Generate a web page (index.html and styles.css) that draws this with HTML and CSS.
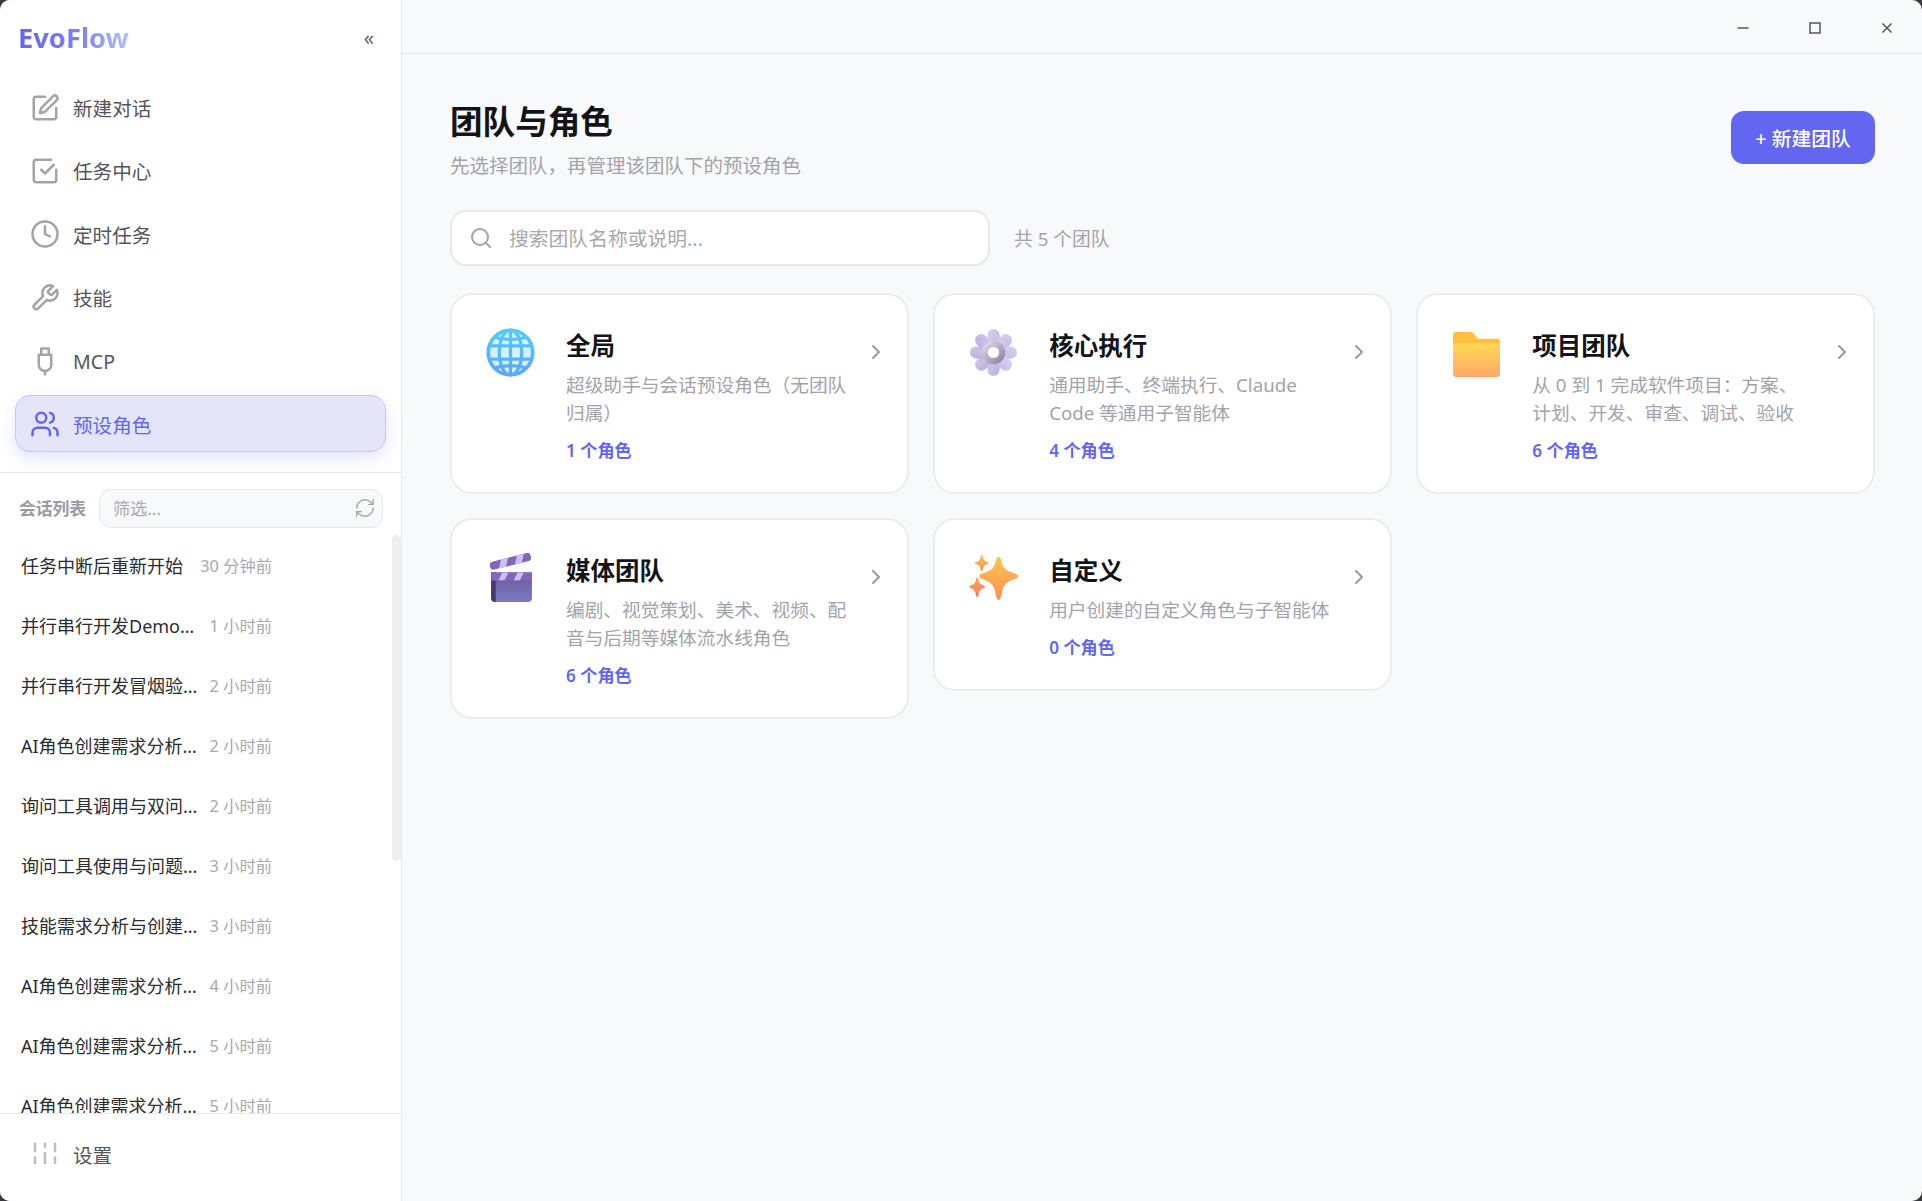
FILE: index.html
```html
<!DOCTYPE html>
<html lang="zh-CN">
<head>
  <meta charset="UTF-8" />
  <title>EvoFlow</title>
  <link rel="stylesheet" href="styles.css">
</head>
<body>
<div class="app">
  <aside class="sidebar">
    <div class="brand">
      <span class="logo">EvoFlow</span>
      <span class="collapse">«</span>
    </div>
    <nav class="nav">
      <a class="nav-item">
        <svg class="icon" viewBox="0 0 24 24"><path d="M12 3H5a2 2 0 0 0-2 2v14a2 2 0 0 0 2 2h14a2 2 0 0 0 2-2v-7"/><path d="M18.375 2.625a1 1 0 0 1 3 3l-9.013 9.014a2 2 0 0 1-.853.505l-2.873.84a.5.5 0 0 1-.62-.62l.84-2.873a2 2 0 0 1 .506-.852z"/></svg>
        新建对话
      </a>
      <a class="nav-item">
        <svg class="icon" viewBox="0 0 24 24"><path d="M21 11v8a2 2 0 0 1-2 2H5a2 2 0 0 1-2-2V5a2 2 0 0 1 2-2h12"/><path d="m9 11 3 3 7-7"/></svg>
        任务中心
      </a>
      <a class="nav-item">
        <svg class="icon" viewBox="0 0 24 24"><circle cx="12" cy="12" r="10"/><path d="M12 6v6l4 2"/></svg>
        定时任务
      </a>
      <a class="nav-item">
        <svg class="icon" viewBox="0 0 24 24"><path d="M14.7 6.3a1 1 0 0 0 0 1.4l1.6 1.6a1 1 0 0 0 1.4 0l3.77-3.77a6 6 0 0 1-7.94 7.94l-6.91 6.91a2.12 2.12 0 0 1-3-3l6.91-6.91a6 6 0 0 1 7.94-7.94l-3.76 3.76z"/></svg>
        技能
      </a>
      <a class="nav-item">
        <svg class="icon" viewBox="0 0 24 24"><path d="M9 7V2h6v5"/><path d="M7 7h10v8a5 5 0 0 1-10 0z"/><path d="M12 20v2.5"/></svg>
        MCP
      </a>
      <a class="nav-item active">
        <svg class="icon" viewBox="0 0 24 24"><path d="M16 21v-2a4 4 0 0 0-4-4H6a4 4 0 0 0-4 4v2"/><circle cx="9" cy="7" r="4"/><path d="M22 21v-2a4 4 0 0 0-3-3.87"/><path d="M16 3.13a4 4 0 0 1 0 7.75"/></svg>
        预设角色
      </a>
    </nav>

    <div class="filter-row">
      <span class="filter-label">会话列表</span>
      <div class="filter-box">
        <input class="filter-input" placeholder="筛选...">
        <svg class="refresh" viewBox="0 0 24 24"><path d="M3 12a9 9 0 0 1 9-9 9.75 9.75 0 0 1 6.74 2.74L21 8"/><path d="M21 3v5h-5"/><path d="M21 12a9 9 0 0 1-9 9 9.75 9.75 0 0 1-6.74-2.74L3 16"/><path d="M8 16H3v5"/></svg>
      </div>
    </div>

    <div class="sessions-wrap">
      <div class="sessions">
        <div class="session"><span class="session-title">任务中断后重新开始</span><span class="session-time">30 分钟前</span></div>
        <div class="session"><span class="session-title">并行串行开发Demo功能验证</span><span class="session-time">1 小时前</span></div>
        <div class="session"><span class="session-title">并行串行开发冒烟验证任务</span><span class="session-time">2 小时前</span></div>
        <div class="session"><span class="session-title">AI角色创建需求分析与设计</span><span class="session-time">2 小时前</span></div>
        <div class="session"><span class="session-title">询问工具调用与双问题测试</span><span class="session-time">2 小时前</span></div>
        <div class="session"><span class="session-title">询问工具使用与问题反馈记录</span><span class="session-time">3 小时前</span></div>
        <div class="session"><span class="session-title">技能需求分析与创建流程梳理</span><span class="session-time">3 小时前</span></div>
        <div class="session"><span class="session-title">AI角色创建需求分析与设计</span><span class="session-time">4 小时前</span></div>
        <div class="session"><span class="session-title">AI角色创建需求分析与设计</span><span class="session-time">5 小时前</span></div>
        <div class="session"><span class="session-title">AI角色创建需求分析与设计</span><span class="session-time">5 小时前</span></div>
      </div>
      <div class="scroll-thumb"></div>
    </div>

    <div class="sidebar-footer">
      <a class="nav-item">
        <svg class="icon icon-flat" viewBox="0 0 24 24"><path d="M4 3v7.500M4 14v6M12 3v4M12 10.500V20M20 3v7.500M20 14v6"/></svg>
        设置
      </a>
    </div>
  </aside>

  <main class="main">
    <div class="titlebar">
      <button class="win-btn"><svg viewBox="0 0 12 12"><path d="M.5 6h11"/></svg></button>
      <button class="win-btn"><svg viewBox="0 0 12 12"><rect x="1" y="1" width="10" height="10"/></svg></button>
      <button class="win-btn"><svg viewBox="0 0 12 12"><path d="M1.500 1.500l9 9M10.500 1.500l-9 9"/></svg></button>
    </div>

    <div class="content">
      <div class="page-head">
        <div>
          <h1>团队与角色</h1>
          <p class="subtitle">先选择团队，再管理该团队下的预设角色</p>
        </div>
        <button class="new-btn">+ 新建团队</button>
      </div>

      <div class="search-row">
        <div class="search-box">
          <svg viewBox="0 0 24 24"><path d="m21 21-4.34-4.34"/><circle cx="11" cy="11" r="8"/></svg>
          <input placeholder="搜索团队名称或说明...">
        </div>
        <span class="total">共 5 个团队</span>
      </div>

      <div class="teams">
        <div class="card">
          <svg class="card-icon" viewBox="0 0 48 48">
            <defs><linearGradient id="globeLine" x1="0" y1="0" x2="0" y2="1"><stop offset="0" stop-color="#55c9f9"/><stop offset="1" stop-color="#5aa8fb"/></linearGradient></defs>
            <circle cx="24" cy="24" r="21.800" fill="#d4f1ff" stroke="url(#globeLine)" stroke-width="3.600"/>
            <g fill="none" stroke="url(#globeLine)" stroke-width="3.200">
              <ellipse cx="24" cy="24" rx="11" ry="22"/>
              <path d="M24 2v44M3 17.500h42M3 30.500h42M8 8.500c9 3.500 23 3.500 32 0M8 39.500c9-3.500 23-3.500 32 0"/>
            </g>
          </svg>
          <div class="card-body">
            <h3>全局</h3>
            <p class="desc">超级助手与会话预设角色（无团队归属）</p>
            <p class="count">1 个角色</p>
          </div>
          <svg class="chevron" viewBox="0 0 24 24"><path d="m9 18 6-6-6-6"/></svg>
        </div>

        <div class="card">
          <svg class="card-icon" viewBox="0 0 48 48">
            <defs>
              <linearGradient id="gearBody" x1="0" y1="0" x2="1" y2="1"><stop offset="0" stop-color="#d8d0f0"/><stop offset="1" stop-color="#bdb1de"/></linearGradient>
              <linearGradient id="gearRing" x1="0" y1="0" x2="1" y2="1"><stop offset="0" stop-color="#dcd8e6"/><stop offset="1" stop-color="#8f86a8"/></linearGradient>
            </defs>
            <g fill="url(#gearBody)">
              <circle cx="24" cy="24" r="16"/>
              <rect x="18" y="1" width="12" height="46" rx="6"/>
              <rect x="18" y="1" width="12" height="46" rx="6" transform="rotate(45 24 24)"/>
              <rect x="18" y="1" width="12" height="46" rx="6" transform="rotate(90 24 24)"/>
              <rect x="18" y="1" width="12" height="46" rx="6" transform="rotate(135 24 24)"/>
            </g>
            <circle cx="24" cy="24" r="8.500" fill="#fff" stroke="url(#gearRing)" stroke-width="6"/>
          </svg>
          <div class="card-body">
            <h3>核心执行</h3>
            <p class="desc">通用助手、终端执行、Claude Code 等通用子智能体</p>
            <p class="count">4 个角色</p>
          </div>
          <svg class="chevron" viewBox="0 0 24 24"><path d="m9 18 6-6-6-6"/></svg>
        </div>

        <div class="card">
          <svg class="card-icon" viewBox="0 0 48 48">
            <defs><linearGradient id="folderFront" x1="0" y1="0" x2="0" y2="1"><stop offset="0" stop-color="#ffd955"/><stop offset="1" stop-color="#ffa76a"/></linearGradient></defs>
            <path d="M1 7a3 3 0 0 1 3-3h14a4 4 0 0 1 3 1.400l4.500 5.100H44a3 3 0 0 1 3 3V30H1z" fill="#ffbf3f"/>
            <path d="M1 18a3 3 0 0 1 3-3h40a3 3 0 0 1 3 3v27a3 3 0 0 1-3 3H4a3 3 0 0 1-3-3z" fill="url(#folderFront)"/>
          </svg>
          <div class="card-body">
            <h3>项目团队</h3>
            <p class="desc">从 0 到 1 完成软件项目：方案、<br>计划、开发、审查、调试、验收</p>
            <p class="count">6 个角色</p>
          </div>
          <svg class="chevron" viewBox="0 0 24 24"><path d="m9 18 6-6-6-6"/></svg>
        </div>

        <div class="card">
          <svg class="card-icon" viewBox="0 0 48 48">
            <defs>
              <linearGradient id="clapBody" x1="0" y1="0" x2="0" y2="1"><stop offset="0" stop-color="#6f5a95"/><stop offset="1" stop-color="#7a7bc6"/></linearGradient>
              <clipPath id="clapBar"><rect x="5" y="19" width="40" height="8"/></clipPath>
            </defs>
            <path d="M5 19h40v25a4 4 0 0 1-4 4H9a4 4 0 0 1-4-4z" fill="url(#clapBody)"/>
            <path d="M5 19h4.500v29H9a4 4 0 0 1-4-4z" fill="#473a66"/>
            <rect x="5" y="19" width="40" height="8" fill="#8465b8"/>
            <g clip-path="url(#clapBar)" fill="#c9c0f4">
              <path d="M12 27l4-8h6l-4 8zM27 27l4-8h6l-4 8z"/>
            </g>
            <g transform="rotate(-14 5 17)">
              <rect x="5" y="9" width="41" height="8" rx="3" fill="#8465b8"/>
              <path d="M13 17l4-8h7l-4 8zM29 17l4-8h7l-4 8z" fill="#c9c0f4"/>
            </g>
          </svg>
          <div class="card-body">
            <h3>媒体团队</h3>
            <p class="desc">编剧、视觉策划、美术、视频、配音与后期等媒体流水线角色</p>
            <p class="count">6 个角色</p>
          </div>
          <svg class="chevron" viewBox="0 0 24 24"><path d="m9 18 6-6-6-6"/></svg>
        </div>

        <div class="card">
          <svg class="card-icon" viewBox="0 0 48 48">
            <defs>
              <linearGradient id="sparkBig" x1="0" y1="0" x2="0" y2="1"><stop offset="0" stop-color="#ffc552"/><stop offset="1" stop-color="#ff8f52"/></linearGradient>
              <linearGradient id="sparkLow" x1="0" y1="0" x2="0" y2="1"><stop offset="0" stop-color="#ffa45a"/><stop offset="1" stop-color="#ff7a5e"/></linearGradient>
            </defs>
            <path d="M29 4c1.400 0 2.300 1.500 3 4.500 1.500 6.500 4 8.500 13 11.500 2 .7 3 1.600 3 2.700s-1 2-3 2.700c-9 3-11.500 6-13 14-.7 4-1.600 6.600-3 6.600s-2.300-2.600-3-6.600c-1.500-8-4-11-13-14-2-.7-3-1.600-3-2.700s1-2 3-2.700c9-3 11.500-5 13-11.500.7-3 1.600-4.500 3-4.500z" fill="url(#sparkBig)"/>
            <path d="M12.500 2c.6 0 .9.600 1.100 1.600.6 3 1.500 4.100 4.600 5.200.7.200 1 .6 1 1s-.3.800-1 1c-3.100 1.100-4 2.200-4.600 5.200-.2 1-.5 1.600-1.100 1.600s-.9-.6-1.100-1.600c-.6-3-1.500-4.100-4.600-5.200-.7-.2-1-.6-1-1s.3-.8 1-1c3.100-1.100 4-2.200 4.600-5.200.2-1 .5-1.600 1.100-1.600z" fill="url(#sparkBig)"/>
            <path d="M8 24c.7 0 1 .7 1.200 1.800.7 3.600 1.800 4.800 5.400 6.100.8.300 1.200.7 1.200 1.200s-.4.900-1.200 1.200c-3.600 1.300-4.700 3-5.400 7.100-.2 1.100-.5 1.800-1.200 1.800s-1-.7-1.200-1.800c-.7-4.100-1.800-5.800-5.400-7.100C.8 34 .4 33.600.4 33.100s.4-.9 1.200-1.200c3.600-1.300 4.700-2.500 5.400-6.100C7 24.700 7.300 24 8 24z" fill="url(#sparkLow)"/>
          </svg>
          <div class="card-body">
            <h3>自定义</h3>
            <p class="desc">用户创建的自定义角色与子智能体</p>
            <p class="count">0 个角色</p>
          </div>
          <svg class="chevron" viewBox="0 0 24 24"><path d="m9 18 6-6-6-6"/></svg>
        </div>
      </div>
    </div>
  </main>
</div>
</body>
</html>
```

FILE: styles.css
```css
* {
  margin: 0;
  padding: 0;
  box-sizing: border-box;
}
html, body {
  height: 100%;
}
body {
  background: #3a3a3c;
  font-family: "Noto Sans", "Noto Sans CJK SC", sans-serif;
  color: #1a1a1a;
  overflow: hidden;
}
.app {
  display: flex;
  height: 100%;
  border-radius: 10px;
  overflow: hidden;
  background: #f8f9fb;
}

/* sidebar */
.sidebar {
  width: 402px;
  flex: none;
  display: flex;
  flex-direction: column;
  background: #fff;
  border-right: 1px solid #e8e8ec;
}
.brand {
  height: 78.5px;
  flex: none;
  display: flex;
  align-items: center;
  justify-content: space-between;
  padding: 0 27px 3px 18px;
}
.logo {
  font-size: 27.3px;
  font-weight: 700;
  background: linear-gradient(90deg, #6366f1 0%, #7c7ff5 55%, #b8c0fe 100%);
  -webkit-background-clip: text;
  background-clip: text;
  color: transparent;
}
.collapse {
  font-size: 20px;
  line-height: 1;
  color: #5f5f6a;
}
.nav {
  display: flex;
  flex-direction: column;
  gap: 6.4px;
  padding: 0 15px 19.5px;
  border-bottom: 1px solid #e8e8ec;
}
.nav-item {
  height: 57px;
  display: flex;
  align-items: center;
  gap: 13px;
  padding: 1px 0 0 14px;
  font-size: 19.6px;
  color: #55555e;
  border: 1px solid transparent;
  border-radius: 15px;
}
.nav-item .icon {
  width: 30px;
  height: 30px;
  flex: none;
  fill: none;
  stroke: #a3a3aa;
  stroke-width: 2;
  stroke-linecap: round;
  stroke-linejoin: round;
}
.nav-item .icon-flat {
  stroke: #bcbcc1;
  stroke-linecap: butt;
}
.nav-item.active {
  background: #e4e5f9;
  border-color: #c5c6f5;
  color: #6366f1;
  box-shadow: 0 6px 16px rgba(99, 102, 241, 0.18);
}
.nav-item.active .icon {
  stroke: #6366f1;
}
.filter-row {
  display: flex;
  align-items: center;
  justify-content: space-between;
  flex: none;
  padding: 16px 18px 7px 19px;
}
.filter-label {
  font-size: 16.8px;
  font-weight: 700;
  color: #9a9aa2;
}
.filter-box {
  width: 284px;
  height: 39px;
  display: flex;
  align-items: center;
  background: #f8f9fb;
  border: 1px solid #e8e8ec;
  border-radius: 12px;
  padding: 0 6px 0 13px;
}
.filter-input {
  flex: 1;
  min-width: 0;
  border: 0;
  outline: 0;
  background: transparent;
  font: inherit;
  font-size: 17.15px;
}
.filter-input::placeholder,
.search-box input::placeholder {
  color: #a8a8b0;
  opacity: 1;
}
.refresh {
  width: 22px;
  height: 22px;
  flex: none;
  fill: none;
  stroke: #a3a3aa;
  stroke-width: 1.5;
  stroke-linecap: round;
  stroke-linejoin: round;
}
.sessions-wrap {
  position: relative;
  flex: 1;
  min-height: 0;
}
.sessions {
  height: 100%;
  overflow: hidden;
}
.scroll-thumb {
  position: absolute;
  top: 0;
  right: 0;
  width: 9px;
  height: 326px;
  background: #efeff1;
  border-radius: 5px;
}
.session {
  height: 60px;
  display: flex;
  align-items: center;
  padding: 0 129px 0 21px;
}
.session-title {
  max-width: 178px;
  white-space: nowrap;
  overflow: hidden;
  text-overflow: ellipsis;
  font-size: 18px;
  color: #2b2b30;
}
.session-time {
  margin-left: auto;
  white-space: nowrap;
  font-size: 16.3px;
  color: #a8a8b0;
}
.sidebar-footer {
  height: 88px;
  flex: none;
  border-top: 1px solid #e8e8ec;
  padding: 11px 15px 0;
}

/* main */
.main {
  flex: 1;
  min-width: 0;
  display: flex;
  flex-direction: column;
}
.titlebar {
  height: 54px;
  flex: none;
  display: flex;
  justify-content: flex-end;
  border-bottom: 1px solid #e5e5e8;
}
.win-btn {
  width: 72px;
  display: flex;
  align-items: center;
  justify-content: center;
  border: 0;
  background: transparent;
  padding: 2px 0 0 2px;
}
.win-btn svg {
  width: 12px;
  height: 12px;
  fill: none;
  stroke: #555560;
  stroke-width: 1.5;
}
.content {
  flex: 1;
  padding: 45px 47px 0 48px;
}
.page-head {
  display: flex;
  justify-content: space-between;
  align-items: flex-start;
}
h1 {
  margin-top: 1px;
  font-size: 32.6px;
  font-weight: 700;
  line-height: 44px;
  color: #141418;
}
.subtitle {
  margin-top: 8px;
  font-size: 19.5px;
  line-height: 28px;
  color: #a3a3ab;
}
.new-btn {
  width: 144px;
  height: 53px;
  margin-top: 12px;
  border: 0;
  border-radius: 13px;
  background: #6366f1;
  color: #fff;
  font: inherit;
  font-size: 19.8px;
  font-weight: 500;
}
.search-row {
  display: flex;
  align-items: center;
  gap: 24px;
  margin-top: 30px;
}
.search-box {
  width: 540px;
  height: 56px;
  display: flex;
  align-items: center;
  gap: 16px;
  padding: 0 18px 0 17px;
  background: #fff;
  border: 2px solid #e8e8ec;
  border-radius: 16px;
}
.search-box svg {
  width: 24px;
  height: 24px;
  flex: none;
  fill: none;
  stroke: #a3a3aa;
  stroke-width: 2;
  stroke-linecap: round;
  stroke-linejoin: round;
}
.search-box input {
  flex: 1;
  min-width: 0;
  border: 0;
  outline: 0;
  background: transparent;
  font: inherit;
  font-size: 19.8px;
}
.total {
  font-size: 18.8px;
  color: #a3a3ab;
}
.teams {
  display: grid;
  grid-template-columns: repeat(3, 1fr);
  gap: 24px 24.5px;
  align-items: start;
  margin-top: 27px;
}
.card {
  display: flex;
  align-items: flex-start;
  padding: 34px 19px 29px 34px;
  background: #fff;
  border: 2px solid #ececef;
  border-radius: 22px;
}
.card-icon {
  width: 49px;
  height: 49px;
  flex: none;
  margin: -1px 31px 0 0;
}
.card-body {
  flex: 1;
  min-width: 0;
}
.card h3 {
  font-size: 24.5px;
  font-weight: 700;
  line-height: 34px;
  color: #141418;
}
.desc {
  margin-top: 8px;
  font-size: 18.7px;
  line-height: 28px;
  color: #a3a3ab;
}
.count {
  margin-top: 12px;
  font-size: 17.15px;
  font-weight: 600;
  line-height: 24px;
  color: #6366f1;
}
.chevron {
  width: 24px;
  height: 24px;
  flex: none;
  margin: 11px 0 0 12px;
  fill: none;
  stroke: #9a9aa2;
  stroke-width: 2;
  stroke-linecap: round;
  stroke-linejoin: round;
}
```
